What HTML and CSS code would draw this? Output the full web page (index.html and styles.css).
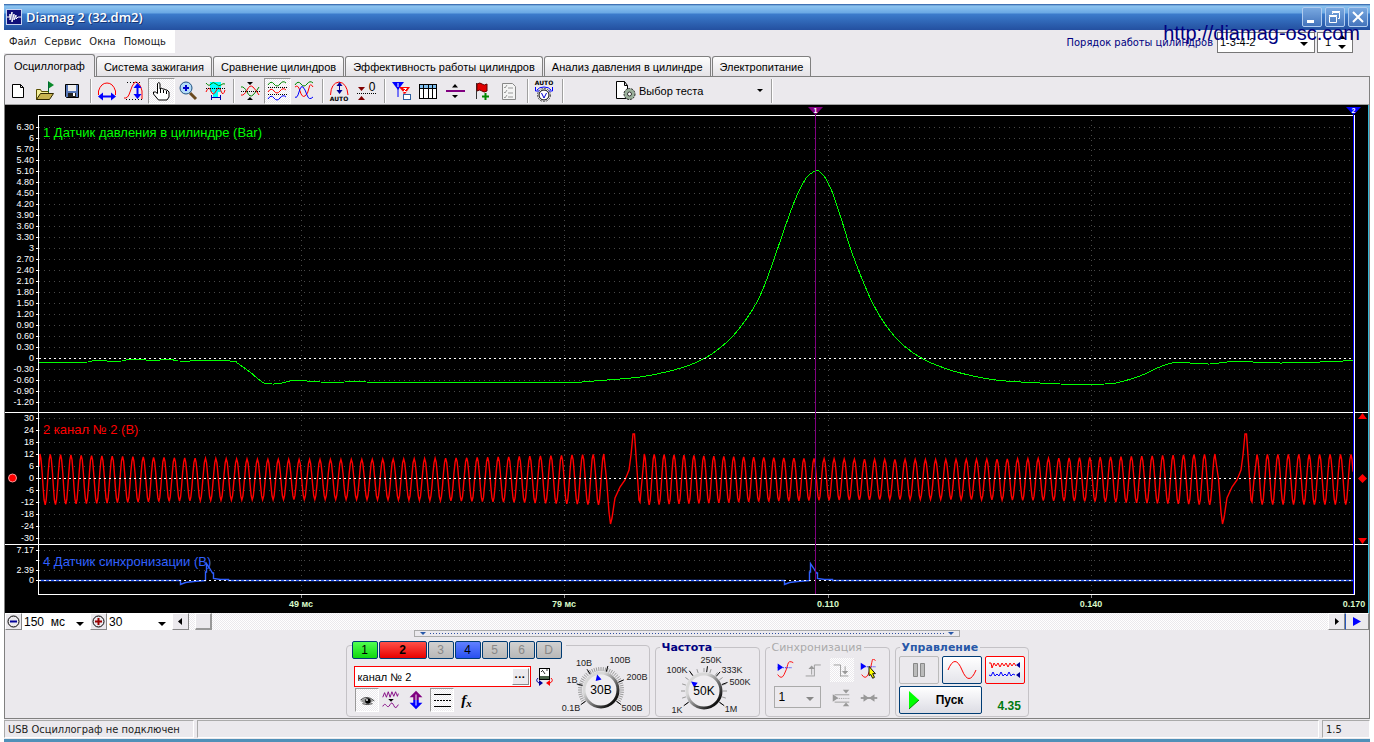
FILE: index.html
```html
<!DOCTYPE html>
<html lang="ru">
<head>
<meta charset="utf-8">
<title>Diamag 2 (32.dm2)</title>
<link rel="stylesheet" href="styles.css">
</head>
<body>
<div class="window">
  <header class="titlebar">
    <svg class="app-icon" width="16" height="16" viewBox="0 0 16 16"><rect width="16" height="16" fill="#c8d4f0"/><rect x="1" y="1" width="14" height="14" fill="#10107a"/><path d="M1 8H4V5V11L6 3V13L8 5V11L10 6V10L12 8H15" fill="none" stroke="#fff"/></svg>
    <h1 class="title">Diamag 2 (32.dm2)</h1>
    <div class="win-buttons">
      <button class="win-btn" aria-label="Свернуть"><svg width="18" height="18" viewBox="0 0 18 18"><rect x="4" y="12" width="7" height="3" fill="#fff"/></svg></button>
      <button class="win-btn" aria-label="Восстановить"><svg width="18" height="18" viewBox="0 0 18 18" fill="none" stroke="#fff"><path d="M3.500 8.500h7v6h-7zM3 7.500h8M6.500 6V4.500h7v6H12M6 3.500h8"/></svg></button>
      <button class="win-btn" aria-label="Закрыть"><svg width="18" height="18" viewBox="0 0 18 18"><path d="M4 4L14 14M14 4L4 14" stroke="#fff" stroke-width="2"/></svg></button>
    </div>
    <span class="site">http://diamag-osc.com</span>
  </header>

  <div class="menu-row">
    <nav class="menu">
      <button>Файл</button><button>Сервис</button><button>Окна</button><button>Помощь</button>
    </nav>
    <div class="order">
      <label for="order">Порядок работы цилиндров</label>
      <span class="pick pick-order"><select id="order"><option>1-3-4-2</option></select></span>
      <span class="spin"><input type="text" value="1" aria-label="Номер цилиндра"></span>
    </div>
  </div>

  <nav class="tabs">
    <button class="tab active">Осциллограф</button><button class="tab">Система зажигания</button><button class="tab">Сравнение цилиндров</button><button class="tab">Эффективность работы цилиндров</button><button class="tab">Анализ давления в цилиндре</button><button class="tab">Электропитание</button>
  </nav>

  <main class="page">
    <div class="toolbar">
      <button class="tool" aria-label="Новый"><svg viewBox="0 0 24 24"><path d="M6.500 5.500h8l3 3v10h-11zM14.500 5.500v3h3" fill="#fff" stroke="#000"/></svg></button>
      <button class="tool" aria-label="Открыть"><svg viewBox="0 0 24 24"><path d="M3.500 20.500v-10h4l1 2h7v3" fill="#f4f09a" stroke="#5a5000"/><path d="M3.500 20.500l4-6h13l-4 6z" fill="#c8b450" stroke="#302800"/><path d="M15 2l6 4-6 4z" fill="#0a8a2a"/><path d="M15.500 13V3" stroke="#063"/></svg></button>
      <button class="tool" aria-label="Сохранить"><svg viewBox="0 0 24 24"><path d="M5.500 5.500h13v13h-12l-1-1z" fill="#5878b8" stroke="#000"/><rect x="8" y="6" width="8" height="6" fill="#f0f0f0"/><rect x="8" y="14" width="8" height="4" fill="#222"/><rect x="13" y="14" width="2" height="3" fill="#fff"/></svg></button>
      <i class="sep"></i>
      <button class="tool" aria-label="Период"><svg viewBox="0 0 24 24" fill="none"><path d="M3.500 16V12Q6 4 12 4Q18 4 20.500 12V16" stroke="red"/><path d="M5 17.500H19" stroke="#00f" stroke-width="2"/><path d="M3 17.500l5-4v8zM21 17.500l-5-4v8z" fill="#00f"/></svg></button>
      <button class="tool" aria-label="Амплитуда"><svg viewBox="0 0 24 24" fill="none"><path d="M2 19Q6 20 8 13T13 3Q18 3 20 12V20" stroke="red"/><path d="M5 3.500H18M4 20.500H20" stroke="#000" stroke-dasharray="1 2"/><path d="M15.500 7v10" stroke="#00f" stroke-width="2"/><path d="M15.500 4l-4 5h8zM15.500 20l-4-5h8z" fill="#00f"/></svg></button>
      <button class="tool pressed" aria-label="Рука"><svg viewBox="0 0 24 24"><path d="M8.500 14.500V4.500q1.500-2 2.500 0V10l1-1 2 1 1 0 2 1 1 0 2 2v5l-2 3H9.500L4.500 15v-2h2z" fill="#fff" stroke="#000"/><path d="M11.500 10v4M14.500 11v3M17.500 12v3" stroke="#000"/></svg></button>
      <button class="tool" aria-label="Лупа"><svg viewBox="0 0 24 24"><path d="M14 14l6 6" stroke="#6a4a20" stroke-width="3"/><circle cx="10" cy="9" r="6" fill="#b4dcf8" stroke="#205080"/><path d="M10 6v6M7 9h6" stroke="#00c" stroke-width="2"/></svg></button>
      <button class="tool" aria-label="Фрагмент"><svg viewBox="0 0 24 24" fill="none"><rect x="7" y="3" width="11" height="10" fill="#0ff"/><path d="M10 13h5v6h-5z" fill="#0ff"/><path d="M3 4q3 4 5 1t5 0 5 1 4-1" stroke="#080"/><path d="M3 13q3-7 5-1t5 0 5 0 4-1" stroke="red"/><path d="M3 9.500H22" stroke="#000" stroke-dasharray="1 1"/><path d="M8.500 16v5M17.500 16v5M9 18.500h8" stroke="#00a"/></svg></button>
      <i class="sep"></i>
      <button class="tool" aria-label="Совместить"><svg viewBox="0 0 24 24" fill="none"><path d="M3 8q3-1 6 5t6 3 6-8" stroke="#080"/><path d="M3 16q3 1 6-5t6-3 6 8" stroke="red"/><path d="M3 12.500H22" stroke="#000" stroke-dasharray="1 1"/><path d="M9 3h6l-3 3zM9 21h6l-3-3z" fill="#000"/></svg></button>
      <button class="tool pressed" aria-label="Разнести"><svg viewBox="0 0 24 24" fill="none"><path d="M3 6q3-5 6-1t6 0 6-1" stroke="#080"/><path d="M3 13q3-5 6-1t6 0 6-1" stroke="red"/><path d="M3 20q3-5 6-1t6 0 6-1" stroke="#00f"/><path d="M3 8.500H22M3 15.500H22" stroke="#000" stroke-dasharray="1 1"/></svg></button>
      <button class="tool" aria-label="Наложить"><svg viewBox="0 0 24 24" fill="none"><path d="M3 6q3-5 6-1t6 0 6-1" stroke="#080"/><path d="M3 8q3-3 5 4t5 5 4-8 4-1" stroke="red"/><path d="M3 18q2 2 4-5t4-5 4 8 6 2" stroke="#00f"/></svg></button>
      <i class="sep"></i>
      <button class="tool" aria-label="Авто амплитуда"><svg viewBox="0 0 24 24" fill="none"><path d="M3.500 16Q4 4 12 3Q20 4 21 16" stroke="red"/><path d="M12.500 5v8" stroke="#009"/><path d="M12.500 3l-3 4h6zM12.500 15l-3-4h6z" fill="#009"/><text x="12" y="22" class="auto">AUTO</text></svg></button>
      <button class="tool" aria-label="Ноль"><svg viewBox="0 0 24 24"><path d="M4 8h7l-3.500 4zM4 21h7l-3.500-4z" fill="#800000"/><path d="M3 14.500H22" stroke="#000" stroke-dasharray="1 1"/><text x="18" y="12" class="zero">0</text></svg></button>
      <i class="sep"></i>
      <button class="tool" aria-label="Маркеры"><svg viewBox="0 0 24 24"><path d="M3 3h12l-6 8z" fill="#00f"/><path d="M9 9v9" stroke="#00f"/><path d="M10 8h11l-5 7z" fill="red"/><path d="M15 12v4" stroke="red"/><path d="M9 4v4" stroke="#fff"/><path d="M14.500 9.500h3l-3 3h3" fill="none" stroke="#fff"/><rect x="14.500" y="15.500" width="7" height="5" fill="#fff" stroke="#3060a0"/></svg></button>
      <button class="tool" aria-label="Таблица"><svg viewBox="0 0 24 24" shape-rendering="crispEdges"><rect x="3.500" y="5.500" width="17" height="14" fill="#fff" stroke="#000"/><rect x="4" y="6" width="16" height="3" fill="#80c0f0"/><path d="M3 9.500h18M7.500 6v13M12.500 6v13M16.500 6v13" stroke="#000"/></svg></button>
      <button class="tool" aria-label="Линия"><svg viewBox="0 0 24 24"><path d="M3 12H22" stroke="#800080" stroke-width="2"/><path d="M9 8.500h6L12 5zM9 16h6l-3 3z" fill="#000"/></svg></button>
      <button class="tool" aria-label="Флажок"><svg viewBox="0 0 24 24"><path d="M6.500 4v16" stroke="#333"/><path d="M7 5q3-2 5 0t5 0v7q-3 2-5 0t-5 0z" fill="#e00000" stroke="#600"/><path d="M15.500 14v7M12 17.500h7" stroke="#080" stroke-width="2"/></svg></button>
      <button class="tool" aria-label="Список"><svg viewBox="0 0 24 24" fill="none"><path d="M5.500 4.500h10l3 3v13h-13z" fill="#f4f4f4" stroke="#888"/><path d="M7 8l1 1 2-3M7 13l1 1 2-3M7 18l1 1 2-3M11 9h5M11 14h5M11 18h5" stroke="#999"/></svg></button>
      <i class="sep"></i>
      <button class="tool" aria-label="Авто развёртка"><svg viewBox="0 0 24 24" fill="none"><text x="12" y="6" class="auto">AUTO</text><path d="M5 11q2-3 7-3t7 3" stroke="#00f"/><path d="M3.500 8v4h4M20.500 8v4h-4" stroke="#00f"/><circle cx="12" cy="16" r="6.500" stroke="#555" stroke-dasharray="2 1"/><circle cx="12" cy="16" r="5" fill="#fff" stroke="#000"/><path d="M9.500 14l2.500 5 2.500-5" stroke="#00c"/></svg></button>
      <i class="sep"></i>
      <button class="test"><svg width="22" height="22" viewBox="0 0 22 22"><path d="M1.500 1.500h8l3 4v13h-11zM9.500 1.500v4h3" fill="#fff" stroke="#000"/><circle cx="14.500" cy="14" r="5.500" fill="#9ab09a" stroke="#222" stroke-dasharray="2 1"/><circle cx="14.500" cy="14" r="2" fill="#fff" stroke="#333"/></svg><span>Выбор теста</span><b class="down"></b></button>
      <i class="sep"></i>
    </div>

    <svg class="scope" id="scope" viewBox="5 105 1364 508" role="img" aria-label="Осциллограммы"></svg>

    <div class="scroll-row">
      <button class="mini" aria-label="Уменьшить"><svg width="15" height="15" viewBox="0 0 15 15"><circle cx="7.500" cy="7.500" r="5.500" fill="none" stroke="#000"/><path d="M4 7.500h7" stroke="#009" stroke-width="2"/></svg></button>
      <span class="pick pick-time"><select aria-label="Развёртка"><option>150&nbsp; мс</option></select></span>
      <button class="mini" aria-label="Увеличить"><svg width="15" height="15" viewBox="0 0 15 15"><circle cx="7.500" cy="7.500" r="5.500" fill="none" stroke="#000"/><path d="M4 7.500h7M7.500 4v7" stroke="#900" stroke-width="2"/></svg></button>
      <span class="pick pick-scale"><select aria-label="Масштаб"><option>30</option></select></span>
      <button class="mini" aria-label="Влево"><svg width="15" height="15" viewBox="0 0 15 15"><path d="M9 4v7L5 7.500z"/></svg></button>
      <div class="track"><i class="thumb"></i></div>
      <button class="mini" aria-label="Вправо"><svg width="15" height="15" viewBox="0 0 15 15"><path d="M6 4v7l4-3.500z"/></svg></button>
      <button class="mini play" aria-label="Воспроизвести"><svg width="15" height="15" viewBox="0 0 15 15"><path d="M3 3v9l8-4.500z" fill="#00f"/></svg></button>
    </div>
    <div class="splitter"><i></i><span></span><i></i></div>

    <section class="panel">
      <div class="group channel">
        <div class="chan-main">
          <div class="chan-row">
            <button class="chan c-green">1</button><button class="chan c-red">2</button><button class="chan">3</button><button class="chan c-blue">4</button><button class="chan">5</button><button class="chan">6</button><button class="chan">D</button>
          </div>
          <div class="name-row">
            <span class="name-box"><input type="text" value="канал № 2" aria-label="Имя канала"><button class="dots" aria-label="Выбрать">···</button></span>
            <button class="ico" aria-label="Датчик"><svg width="20" height="20" viewBox="0 0 20 20" fill="none"><rect x="4.500" y="1.500" width="10" height="11" fill="#fff" stroke="#000"/><rect x="5" y="9" width="9" height="3" fill="#486048"/><path d="M6 5l2-2M10 7L8 4M11 3h2" stroke="#333"/><path d="M3 11q-3 3 1 5" stroke="#009"/><path d="M4 13l4 3-4 3z" fill="#009"/><path d="M16 11q3 3-1 5" stroke="red"/><path d="M15 13v6l-4-3z" fill="red"/></svg></button>
          </div>
          <div class="opt-row">
            <button class="opt pressed" aria-label="Показать"><svg viewBox="0 0 24 24"><path d="M5 13q7-6 14 0-7 6-14 0z" fill="#999"/><path d="M5 12q7-6 15 1M7 16q5 2 11 0" fill="none" stroke="#333"/><circle cx="13" cy="13" r="3" fill="#000"/><circle cx="12" cy="12" r="1" fill="#fff"/></svg></button>
            <button class="opt" aria-label="Фильтр"><svg viewBox="0 0 24 24" fill="none"><path d="M3 9l2-5 2 5 2-6 2 6 2-6 2 5 2-5 2 5 1-3M3 19q2-4 4-1t4-1 4 1 5-1" stroke="#800080"/><path d="M9 11h6l-3 3z" fill="#000"/></svg></button>
            <button class="opt" aria-label="Смещение"><svg viewBox="0 0 24 24"><path d="M12 2l7 7h-4v3H9V9H5z" fill="#800080"/><path d="M12 22l7-7h-4v-3H9v3H5z" fill="#00f"/><path d="M12 6v12" stroke="#fff"/></svg></button>
            <button class="opt pressed" aria-label="Линии"><svg viewBox="0 0 22 22" stroke="#000" shape-rendering="crispEdges"><path d="M3 5.500h17M3 17.500h17"/><path d="M3 11.500h17" stroke-dasharray="2 1"/></svg></button>
            <button class="opt fx" aria-label="Функция">f<sub>x</sub></button>
          </div>
        </div>
        <svg class="dial" id="dial-v" width="88" height="66" viewBox="560 651 88 66" role="img" aria-label="Диапазон 30В"></svg>
      </div>

      <fieldset class="group freq"><legend>Частота</legend>
        <svg class="dial" id="dial-f" width="100" height="62" viewBox="656 653 100 62" role="img" aria-label="Частота 50K"></svg>
      </fieldset>

      <fieldset class="group sync"><legend>Синхронизация</legend>
        <div class="sync-grid">
          <button class="ico" aria-label="Уровень"><svg viewBox="0 0 24 24" fill="none"><path d="M4 17q4 6 7 0T15 6t6-2" stroke="red"/><path d="M4 9.500h16" stroke="#00f" stroke-dasharray="1 1"/><path d="M4 5v8l6-4z" fill="#00f"/></svg></button>
          <button class="ico" aria-label="Фронт"><svg viewBox="0 0 24 24" fill="none"><path d="M4 18.500h9M13.500 19V6.500h7M10.500 17V9" stroke="#999"/><path d="M7 11l3.500-4 3.500 4z" fill="#999"/></svg></button>
          <button class="ico pressed" aria-label="Спад"><svg viewBox="0 0 24 24" fill="none"><path d="M4 6.500h7.500V19M11 18.500h9M16.500 8v7" stroke="#999"/><path d="M13 13h7l-3.500 4z" fill="#999"/></svg></button>
          <button class="ico" aria-label="Указать"><svg viewBox="0 0 24 24" fill="none"><path d="M4 17q4 6 7 0T15 4t4-2" stroke="red"/><path d="M4 8.500h16" stroke="#00f" stroke-dasharray="1 1"/><path d="M3 4v8l6-4z" fill="#00f"/><path d="M12 8l7 8h-3l2 4-2 1-2-4-2 1z" fill="#ff0" stroke="#000"/></svg></button>
          <span class="pick pick-sync"><select aria-label="Канал синхронизации"><option>1</option></select></span>
          <button class="ico" aria-label="Порог"><svg viewBox="0 0 24 24" fill="none"><path d="M3 8v8l6-4zM14 3h7l-3.500 4zM14 21h7l-3.500-4z" fill="#999"/><path d="M5 8.500h16M5 16.500h16" stroke="#999"/><path d="M8 12.500h13" stroke="#999" stroke-dasharray="1 1"/></svg></button>
          <button class="ico" aria-label="Сжать"><svg viewBox="0 0 24 24"><path d="M3 12h18" stroke="#999" stroke-width="2"/><path d="M6 8v8l6-4zM18 8v8l-6-4z" fill="#999"/></svg></button>
        </div>
      </fieldset>

      <fieldset class="group control"><legend>Управление</legend>
        <div class="ctl-row">
          <button class="ctl off" aria-label="Пауза"><svg width="36" height="24" viewBox="0 0 36 24"><path d="M12.500 5.500h4v13h-4zM19.500 5.500h4v13h-4z" fill="#bbb" stroke="#888"/></svg></button>
          <button class="ctl" aria-label="Один кадр"><svg width="36" height="24" viewBox="0 0 36 24"><path d="M4 12Q11-5 18 12T32 12" fill="none" stroke="red"/></svg></button>
          <button class="ctl chosen" aria-label="Непрерывно"><svg width="36" height="24" viewBox="0 0 36 24" fill="none"><path d="M2 5l2 0 1 5 2-5 2 3 2-3 2 4 2-4 2 3 2-3 2 4 2-4 2 3 2-3 2 3" stroke="red"/><path d="M2 17l2 1 2-4 2 4 2-2 2 2 2-4 2 4 2-2 2 2 2-4 2 4 2-2 2 1" stroke="#00f"/><path d="M33 4v6l-4-3zM33 14v6l-4-3z" fill="#009"/></svg></button>
        </div>
        <div class="ctl-row">
          <button class="start"><svg width="10" height="20" viewBox="0 0 10 20"><path d="M0 1v18l10-9z" fill="#0f0"/><path d="M0 19l10-9" stroke="#080"/></svg><span>Пуск</span></button>
          <output class="version">4.35</output>
        </div>
      </fieldset>
    </section>
  </main>

  <footer class="status">
    <span class="cell cell-usb">USB Осциллограф не подключен</span><span class="cell cell-fill"></span><span class="cell cell-num">1.5</span>
  </footer>
</div>
<script src="scope.js"></script>
</body>
</html>
```
FILE: styles.css
```css
* { box-sizing: border-box; }
body { margin: 4px 4px 0; background: #fff; font: 11px "Liberation Sans", sans-serif; color: #000; }
button, select, input { font: inherit; color: inherit; margin: 0; padding: 0; border: 0; border-radius: 0; background: none; }
svg { display: block; }
.window { background: #ebe9ed; border-bottom: 3px solid #5090b8; }

.titlebar { position: relative; display: flex; align-items: center; height: 26px; padding: 0 2px; gap: 4px; background: linear-gradient(#2858a0 0, #8cc4f0 2px, #6aa8e4 9px, #3c7ccc 10px, #2c60b0 20px, #2450a0 100%); }
.title { flex: 1; margin: 0; font: 600 13px "Open Sans", sans-serif; color: #fff; text-shadow: 1px 1px 0 #183878; }
.win-buttons { display: flex; gap: 3px; }
.win-btn { width: 20px; height: 20px; border: 1px solid #b0ccf0; border-radius: 2px; background: linear-gradient(#78a8e0, #4474bc); }
.site { position: absolute; right: 10px; top: 17px; z-index: 2; font-size: 20px; line-height: 24px; color: #000080; }

.menu-row { display: flex; justify-content: space-between; align-items: flex-start; height: 24px; font: 11px "DejaVu Sans Condensed", "DejaVu Sans", sans-serif; }
.menu { display: flex; gap: 8px; padding: 0 9px 0 5px; height: 23px; background: #fff; }
.menu button { color: #222; }
.order { display: flex; align-items: center; gap: 2px; height: 24px; padding-right: 17px; color: #000080; }
.order label { padding-right: 2px; }
.pick { position: relative; display: flex; background: #fff; color: #000; font-family: "Liberation Sans", sans-serif; font-size: 12px; }
.pick select { appearance: none; width: 100%; padding: 0 14px 0 2px; outline: none; }
.pick::after { content: ""; position: absolute; right: 6px; top: 50%; border: 4px solid transparent; border-top-color: #000; border-bottom: 0; pointer-events: none; }
.pick-order { width: 98px; height: 21px; border: 1px solid #777; font-size: 11px; }
.spin { position: relative; display: flex; width: 36px; height: 21px; border: 1px solid #777; background: #fff; color: #000; font-family: "Liberation Sans", sans-serif; font-size: 11px; }
.spin input { width: 100%; padding-left: 7px; }
.spin::before, .spin::after { content: ""; position: absolute; right: 6px; border: 4px solid transparent; }
.spin::before { top: 2px; border-bottom-color: #000; border-top: 0; }
.spin::after { bottom: 3px; border-top-color: #000; border-bottom: 0; }

.tabs { display: flex; align-items: flex-end; gap: 1px; height: 22px; }
.tab { height: 20px; padding: 0 7px; border: 1px solid #808080; border-bottom: 0; border-radius: 3px 3px 0 0; background: linear-gradient(#fdfdfd, #e4e2e6); white-space: nowrap; }
.tab.active { height: 23px; padding: 0 9px; margin-bottom: -1px; background: #ebe9ed; z-index: 1; }

.page { border: 1px solid #808080; }
.toolbar { display: flex; align-items: center; height: 28px; border-bottom: 1px solid #a0a0a0; }
.tool { width: 27px; height: 26px; padding: 0 1px; }
.tool svg { width: 24px; height: 24px; }
.pressed { background: repeating-conic-gradient(#fff 0 25%, #ebe9ed 0 50%) 0 0 / 2px 2px; border: 1px solid #fff; border-top-color: #999; border-left-color: #999; }
.tool.pressed { padding: 0; }
.sep { width: 8px; height: 24px; background: linear-gradient(90deg, transparent 4px, #a0a0a0 4px 5px, #fff 5px 6px, transparent 6px); }
.auto { font: bold 6px "DejaVu Sans", sans-serif; text-anchor: middle; fill: #000; }
.zero { font: 12px "Liberation Sans", sans-serif; text-anchor: middle; fill: #000; }
.test { display: flex; align-items: center; width: 201px; gap: 2px; padding: 0 4px 0 49px; }
.test span { flex: 1; text-align: left; }
.down { border: 3px solid transparent; border-top-color: #000; border-bottom: 0; }

.scope { width: 100%; height: auto; background: #000; font-family: "Liberation Sans", sans-serif; }
.frame { fill: none; stroke: #fff; shape-rendering: crispEdges; }
.dots-grid { stroke: #484848; stroke-dasharray: 1 4; shape-rendering: crispEdges; }
.zero-line { stroke: #fff; stroke-dasharray: 2 3; shape-rendering: crispEdges; }
.scale { font-size: 9px; fill: #fff; text-anchor: end; }
.time { font-size: 9px; font-weight: bold; fill: #d8f8c8; text-anchor: middle; }
.name { font-size: 13px; }
.trace { fill: none; stroke-width: 1; shape-rendering: crispEdges; }
.trace.wave { stroke-width: 1.4; shape-rendering: auto; }
.mark { font: bold 7px "Liberation Sans", sans-serif; fill: #fff; text-anchor: middle; }

.scroll-row { display: flex; height: 17px; background: #fff; }
.mini { flex: none; width: 17px; height: 17px; background: #ebe9ed; border: 1px solid #fff; border-right-color: #888; border-bottom-color: #888; }
.mini.play { display: flex; justify-content: center; width: 24px; border-left: 1px solid #2858c0; }
.pick-time { width: 68px; }
.pick-scale { width: 65px; }
.track { flex: 1; padding-left: 6px; background: repeating-conic-gradient(#fff 0 25%, #ebe9ed 0 50%) 0 0 / 2px 2px; }
.thumb { display: block; width: 17px; height: 17px; background: #ebe9ed; border: 1px solid #fff; border-right: 2px solid #999; border-bottom: 2px solid #999; }
.splitter { display: flex; align-items: center; width: 40%; height: 7px; margin: 0 auto; padding: 0 5px; gap: 4px; border: 1px solid #aaa; }
.splitter span { flex: 1; height: 1px; background: repeating-linear-gradient(90deg, #3050a0 0 1px, transparent 1px 3px); }
.splitter i { border: 3px solid transparent; border-top-color: #2858a8; border-bottom: 0; }

.panel { display: flex; justify-content: center; align-items: flex-end; gap: 5px; height: 81px; padding-bottom: 1px; }
.group { margin: 0; padding: 0; border: 1px solid #c4c2c6; border-radius: 4px; min-width: 0; }
.group legend { margin-left: 4px; padding: 0 2px; font: bold 11px/13px "DejaVu Sans", sans-serif; }
.channel { display: flex; width: 304px; height: 72px; }
.chan-main { width: 214px; padding-left: 5px; }
.chan-row { display: flex; gap: 1px; margin-top: -5px; width: 214px; background: #ebe9ed; }
.chan { width: 26px; height: 18px; border: 1px solid #003c74; border-radius: 2px; background: linear-gradient(#d0d0d0, #b8b8b8); color: #888; font-size: 12px; }
.c-green { background: linear-gradient(#50ff50, #10d810); color: #000; }
.c-red { width: 48px; background: linear-gradient(#ff5048, #e80000); color: #000; font-weight: bold; }
.c-blue { background: linear-gradient(#6080ff, #2850f0); color: #000; }
.name-row { display: flex; align-items: center; gap: 4px; padding: 7px 0 0 2px; }
.name-box { display: flex; width: 177px; height: 21px; border: 1px solid red; background: #fff; }
.name-box input { flex: 1; min-width: 0; padding-left: 3px; outline: none; font-size: 11px; }
.dots { width: 17px; height: 17px; margin: 1px; background: #ebe9ed; border: 1px solid #fff; border-right-color: #888; border-bottom-color: #888; font-weight: bold; line-height: 12px; }
.name-row .ico { width: 20px; height: 20px; }
.opt-row { display: flex; gap: 1px; padding: 1px 0 0 3px; }
.opt { width: 24px; height: 24px; }
.opt svg { width: 22px; height: 22px; }
.fx { font: italic bold 15px/20px "Liberation Serif", serif; }
.fx sub { font-size: 11px; line-height: 1px; vertical-align: -2px; }
.dial { flex: none; }
.dial text { font: 9px "Liberation Sans", sans-serif; text-anchor: middle; fill: #222; }
.dial .value { font-size: 12px; fill: #000; }
#dial-v { margin-top: 4px; }
.group.freq, .group.sync, .group.control { height: 76px; }
.freq { width: 105px; }
.freq legend { color: #000080; }
.sync { width: 125px; }
.sync legend { color: #aaa; }
.sync legend { font-weight: normal; }
.sync-grid { display: grid; grid-template-columns: repeat(4, 24px); column-gap: 4px; row-gap: 4px; padding: 4px 0 0 8px; }
.sync .ico { width: 24px; height: 24px; }
.sync .ico svg { width: 22px; height: 22px; }
.sync .ico.pressed { border: 0; }
.pick-sync { grid-column: span 2; width: 47px; height: 22px; border: 1px solid #aaa; background: #ebe9ed; }
.pick-sync::after { border-top-color: #888; }
.pick-sync select { padding-left: 4px; }
.control { width: 134px; }
.control legend { color: #2858a8; }
.ctl-row { display: flex; gap: 3px; padding: 2px 0 0 3px; }
.ctl { display: flex; align-items: center; justify-content: center; width: 40px; height: 28px; border: 1px solid #003c74; border-radius: 2px; background: linear-gradient(#fff, #e4e4ea); }
.ctl.off { border-color: #bbb; background: #ebe9ed; }
.ctl.chosen { border-color: red; }
.start { display: flex; align-items: center; width: 83px; height: 28px; padding-left: 9px; border: 1px solid #003c74; border-radius: 2px; background: linear-gradient(#fff, #dcdce4); font: bold 12px "Liberation Sans", sans-serif; }
.start span { flex: 1; }
.version { align-self: flex-end; padding-left: 13px; font: bold 12px/16px "Liberation Sans", sans-serif; color: #007a10; }

.status { display: flex; gap: 3px; height: 20px; padding: 1px 0; font: 11px "DejaVu Sans Condensed", "DejaVu Sans", sans-serif; color: #222; }
.cell { padding: 0 3px; line-height: 17px; border: 1px solid #fff; border-top-color: #aaa; border-left-color: #aaa; white-space: nowrap; }
.cell-usb { width: 190px; }
.cell-fill { flex: 1; }
.cell-num { width: 48px; }
```
FILE: scope.js
```js
const NS = "http://www.w3.org/2000/svg";

function add(parent, tag, attrs, text) {
  const el = document.createElementNS(NS, tag);
  for (const key in attrs) el.setAttribute(key, attrs[key]);
  if (text !== undefined) el.textContent = text;
  parent.appendChild(el);
  return el;
}

const scope = document.getElementById("scope");
const LEFT = 38, RIGHT = 1354, BOTTOM = 594;

function row(y, label, zero) {
  add(scope, "path", { d: `M39 ${y + 0.5}H${RIGHT}`, class: zero ? "zero-line" : "dots-grid" });
  add(scope, "path", { d: `M36 ${y + 0.5}H${LEFT}`, class: "frame" });
  if (label) add(scope, "text", { x: 34, y: y + 3, class: "scale" }, label);
}

const times = [[301, "49 мс"], [564, "79 мс"], [828, "0.110"], [1091, "0.140"]];
times.forEach(([x, label]) => {
  add(scope, "path", { d: `M${x + 0.5} 120V${BOTTOM}`, class: "dots-grid" });
  add(scope, "path", { d: `M${x + 0.5} 595V598`, stroke: "#888" });
  add(scope, "text", { x, y: 607, class: "time" }, label);
});
add(scope, "text", { x: 1354, y: 607, class: "time" }, "0.170");

const zeros = [];
for (let i = 0; i < 26; i++) {
  const v = (63 - 3 * i) / 10;
  if (v === 0) zeros.push([127 + 11 * i, "0"]);
  else row(127 + 11 * i, Number.isInteger(v) ? String(v) : v.toFixed(2));
}
for (let i = 0; i < 11; i++) {
  const v = 30 - 6 * i;
  if (v === 0) zeros.push([418 + 12 * i, "0"]);
  else row(418 + 12 * i, String(v));
}
row(550, "7.17");
row(560);
row(570, "2.39");

/* Catmull-Rom interpolation through the pressure samples */
function smooth(p) {
  let d = `M${p[0]}`;
  for (let i = 0; i < p.length - 1; i++) {
    const a = p[i - 1] || p[i], b = p[i], c = p[i + 1], e = p[i + 2] || c;
    d += `C${b[0] + (c[0] - a[0]) / 6} ${b[1] + (c[1] - a[1]) / 6} ${c[0] - (e[0] - b[0]) / 6} ${c[1] - (e[1] - b[1]) / 6} ${c}`;
  }
  return d;
}
const pressure = [[39,362],[88,362],[92,361],[122,361],[126,360],[146,360],[150,361],[160,360],[174,360],[178,361],[230,361],[237,363],[243,367],[250,372],[257,378],[264,383],[272,384],[280,383.5],[290,381],[300,380.5],[320,382],[345,382],[360,381.5],[390,382.5],[560,382.5],[600,380.5],[640,377],[670,371],[690,365],[707,357],[720,348],[733,336],[745,321],[757,302],[765,284],[773,262],[783,233],[793,205],[800,189],[807,177],[815,171],[819,171],[826,179],[833,194],[841,218],[850,247],[860,274],[873,304],[887,327],[903,345],[923,359],[947,369],[973,376],[1000,380.5],[1040,383],[1060,384],[1105,384],[1120,382],[1140,376],[1155,369],[1165,365],[1175,362.5],[1190,363],[1210,364],[1235,361.5],[1280,363],[1320,362],[1353,360.5]];
add(scope, "path", { d: smooth(pressure), class: "trace", stroke: "#0f0" });

/* Crankshaft wheel: runs of teeth split by the missing-tooth pulse */
const crank = [];
function teeth(x0, count, p0, p1, amp) {
  for (let n = 0; n <= count; n += 0.1) {
    const x = x0 + p0 * n + (p1 - p0) * n * n / (2 * count);
    crank.push([x, 479.5 - amp(n / count) * Math.cos(2 * Math.PI * n)]);
  }
}
function gap(x) {
  crank.push([x + 2.5, 479], [x + 5, 512], [x + 6.5, 524], [x + 8, 518], [x + 11, 498], [x + 16, 487], [x + 21, 480], [x + 25, 470], [x + 27, 455], [x + 29, 434], [x + 30.5, 434], [x + 33, 470], [x + 35, 500], [x + 36, 502], [x + 38, 480]);
}
const dip = t => 25.5 - 5.5 * Math.sin(Math.PI * t);
crank.push([39, 466]);
teeth(40, 54.01, 10.3, 10.58, dip);
gap(604);
teeth(644.3, 56.01, 9.89, 10.49, dip);
gap(1216);
teeth(1257, 9.2, 10.44, 10.44, () => 25);
add(scope, "path", { d: "M" + crank.map(p => p.map(v => v.toFixed(1)).join(" ")).join("L"), class: "trace wave", stroke: "#f00" });

/* Synchronisation pulses */
const pulse = x => `H${x}V584.5L${x + 5} 582.5L${x + 13} 581.5L${x + 25} 580.5V572H${x + 26}V563.5L${x + 29} 568L${x + 32} 573H${x + 33}V578.5L${x + 40} 579.5H${x + 48}V580.5`;
add(scope, "path", { d: `M39 580.5${pulse(180.5)}${pulse(784.5)}H1353`, class: "trace wave", stroke: "#3060ff" });

zeros.push([580, "0"]);
zeros.forEach(([y, label]) => row(y, label, true));

add(scope, "path", { d: "M38.5 594.5V115.500H1354.5V594.5H38.5M5 412.5H1368M5 544.5H1368", class: "frame" });
add(scope, "path", { d: "M1353.5 115V594", stroke: "#00f" });
add(scope, "path", { d: "M815.5 113V594", stroke: "#800080" });
add(scope, "path", { d: "M1368.5 105V613", stroke: "#30b8d8" });
add(scope, "path", { d: "M808 107H823L815.5 115Z", fill: "#800080" });
add(scope, "path", { d: "M1346 107H1361L1353.5 115Z", fill: "#00f" });
add(scope, "text", { x: 815.5, y: 113, class: "mark" }, "1");
add(scope, "text", { x: 1353.5, y: 113, class: "mark" }, "2");
add(scope, "path", { d: "M1358 419H1367L1362.5 413ZM1358 538H1367L1362.5 544ZM1362.5 474L1367 478.5L1362.5 483L1358 478.5Z", fill: "#f00" });
add(scope, "circle", { cx: 12.5, cy: 478, r: 4, fill: "#f00", stroke: "#f99" });
add(scope, "text", { x: 43, y: 137, class: "name", fill: "#0f0" }, "1 Датчик давления в цилиндре (Bar)");
add(scope, "text", { x: 43, y: 434, class: "name", fill: "#f00" }, "2 канал № 2 (В)");
add(scope, "text", { x: 43, y: 566, class: "name", fill: "#3060ff" }, "4 Датчик синхронизации (В)");

/* Rotary knobs */
function knob(id, cx, cy, value, pointer, labels, major, step, fine) {
  const svg = document.getElementById(id);
  const defs = add(svg, "linearGradient", { id: id + "-rim", x1: 0, y1: 0, x2: 1, y2: 1 });
  add(defs, "stop", { offset: "0.3", "stop-color": "#d8d8d8" });
  add(defs, "stop", { offset: "0.85", "stop-color": "#111" });
  const line = (deg, r1, r2, color) => {
    const a = (deg - 90) * Math.PI / 180;
    add(svg, "path", { d: `M${cx + r1 * Math.cos(a)} ${cy + r1 * Math.sin(a)}L${cx + r2 * Math.cos(a)} ${cy + r2 * Math.sin(a)}`, stroke: color });
  };
  for (let d = -126; d <= 126; d += step) line(d, 19, fine, "#999");
  major.forEach(d => line(d, 19, 25, "#000"));
  add(svg, "circle", { cx, cy, r: 17, fill: "#efedf0", stroke: `url(#${id}-rim)`, "stroke-width": 3 });
  add(svg, "path", { d: "M-3 -10H3L0 -16Z", fill: "#00f", transform: `translate(${cx} ${cy}) rotate(${pointer})` });
  add(svg, "text", { x: cx, y: cy + 4, class: "value" }, value);
  labels.forEach(([x, y, t]) => add(svg, "text", { x, y }, t));
}
knob("dial-v", 600, 691, "30В", -14, [[570,712,"0.1В"],[571,684,"1В"],[583,667,"10В"],[619,664,"100В"],[636,681,"200В"],[631,712,"500В"]], [-126, -76, -34, 16, 66, 126], 6, 23);
knob("dial-f", 704, 690, "50K", -54, [[677,712,"1K"],[677,672,"100K"],[711,662,"250K"],[732,672,"333K"],[740,684,"500K"],[731,711,"1M"]], [-126, -36, 8, 40, 70, 126], 18, 23);
```
